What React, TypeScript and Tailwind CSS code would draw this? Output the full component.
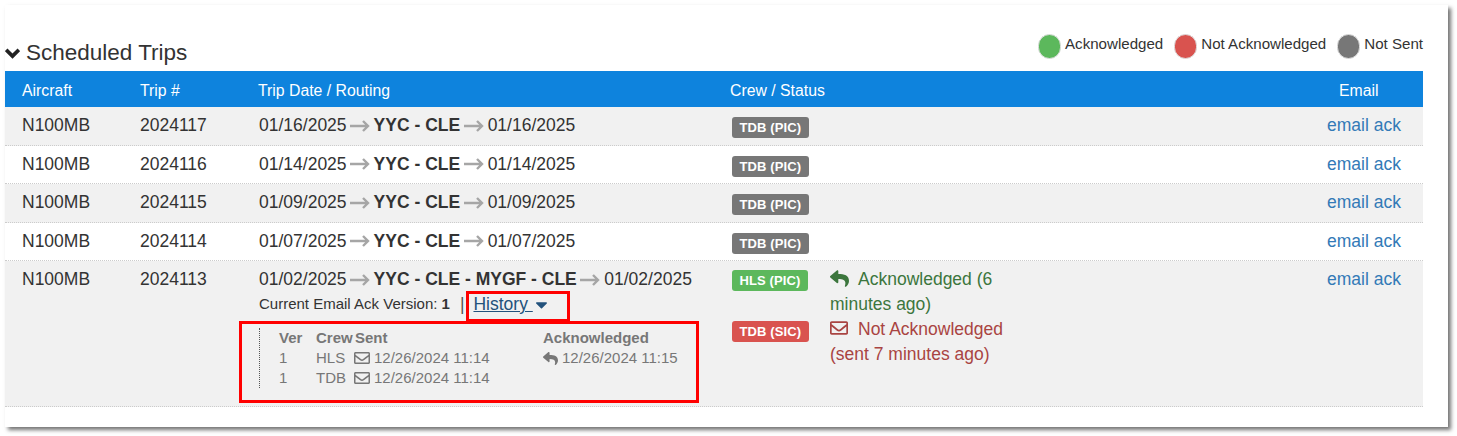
import React from "react";
import { FaCaretDown, FaRegEnvelope, FaReply } from "react-icons/fa";

const trips = [
  { trip: "2024117", date: "01/16/2025", shaded: true },
  { trip: "2024116", date: "01/14/2025", shaded: false },
  { trip: "2024115", date: "01/09/2025", shaded: true },
  { trip: "2024114", date: "01/07/2025", shaded: false },
];

const Arrow = () => (
  <svg viewBox="0 0 20 12" className="mx-[3.5px] inline-block h-[12px] w-[20px] align-[-0.5px] text-[#a6a6a6]" fill="none" stroke="currentColor" strokeWidth="2.4">
    <path d="M0 6h18M13 1l5 5-5 5" />
  </svg>
);

const Badge = ({ label, color }: { label: string; color: string }) => (
  <span className={`inline-block h-[21px] rounded-[3px] px-[7.5px] text-[13px] leading-[21px] font-bold tracking-[0.1px] text-white ${color}`}>
    {label}
  </span>
);

const Legend = ({ label, color }: { label: string; color: string }) => (
  <div className="flex items-center gap-[4px]">
    <span className={`h-[25px] w-[23px] rounded-full border border-[#ddd] ${color}`} />
    <span className="relative top-[-2px]">{label}</span>
  </div>
);

const Routing = ({ date, route }: { date: string; route: string }) => (
  <>
    {date}
    <Arrow />
    <b>{route}</b>
    <Arrow />
    <span className="pl-[0.5px]">{date}</span>
  </>
);

export default function App() {
  return (
    <div className="h-[436px] w-[1457px] bg-white p-[5px] pb-0 font-['Liberation_Sans',Arial,sans-serif] text-[17.5px] text-[#333]">
      <div className="h-[422px] w-[1443px] bg-white shadow-[3px_3px_4px_rgba(0,0,0,0.55)]">
        <div className="w-[1418px]">
          <div className="flex h-[66px] items-start justify-between">
            <div className="mt-[33px] flex items-center gap-[6px] text-[22.5px] leading-[30px]">
              <svg viewBox="0 0 15 12" className="h-[12px] w-[15px] text-[#222]" fill="none" stroke="currentColor" strokeWidth="3.6">
                <path d="M1.2 2.8l6.3 6.3 6.3-6.3" />
              </svg>
              Scheduled Trips
            </div>
            <div className="mt-[28px] flex h-[26px] items-center gap-[11px] text-[15.1px]">
              <Legend label="Acknowledged" color="bg-[#5cb85c]" />
              <Legend label="Not Acknowledged" color="bg-[#d9534f]" />
              <Legend label="Not Sent" color="bg-[#777]" />
            </div>
          </div>

          <div className="flex h-[36px] items-center bg-[#0e83dd] pt-[3px] text-[15.8px] text-white">
            <div className="w-[118px] pl-[17px]">Aircraft</div>
            <div className="w-[118px] pl-[17px]">Trip #</div>
            <div className="w-[471px] pl-[17px]">Trip Date / Routing</div>
            <div className="w-[627px] pl-[18px]">Crew / Status</div>
            <div>Email</div>
          </div>

          {trips.map((t) => (
            <div
              key={t.trip}
              className={`flex h-[38.5px] border-b border-dotted border-[#ccc] pt-[6px] leading-[24px] ${t.shaded ? "bg-[#f1f1f1]" : "bg-white"}`}
            >
              <div className="w-[118px] pl-[17px]">N100MB</div>
              <div className="w-[118px] pl-[17px]">{t.trip}</div>
              <div className="w-[471px] pl-[18px]">
                <Routing date={t.date} route="YYC - CLE" />
              </div>
              <div className="w-[615px] pt-[4px] pl-[20px] leading-none">
                <Badge label="TDB (PIC)" color="bg-[#777]" />
              </div>
              <a className="text-[#337ab7]">email ack</a>
            </div>
          ))}

          <div className="flex h-[145.5px] border-b border-dotted border-[#ccc] bg-[#f1f1f1] pt-[6px] leading-[24px]">
            <div className="w-[118px] pl-[17px]">N100MB</div>
            <div className="w-[118px] pl-[17px]">2024113</div>
            <div className="relative w-[471px] pl-[18px]">
              <Routing date="01/02/2025" route="YYC - CLE - MYGF - CLE" />
              <div className="mt-[1px] flex h-[24px] items-center text-[15px]">
                Current Email Ack Version:&nbsp;<b>1</b>
                <span className="ml-[10px] text-[17.5px] text-[#555]">|</span>
                <a className="relative ml-[9px] flex items-center text-[17.5px] text-[#23527c]">
                  <span className="underline">History&nbsp;</span>
                  <FaCaretDown className="ml-[-1px] text-[19px]" />
                  {/* red annotation box */}
                  <span className="absolute top-[-1px] left-[-7px] h-[31px] w-[104px] border-[3px] border-[#f00]" />
                </a>
              </div>
              <div className="mt-[5px] ml-[-20px] h-[82px] w-[460px] border-[3px] border-[#f00] pt-[5px] pl-[17px] text-[15px] leading-[20px] text-[#777]">
                <div className="w-[420px] border-l border-dotted border-[#555] pl-[19px]">
                  <div className="mt-[-1px] flex font-bold">
                    <div className="w-[37px]">Ver</div>
                    <div className="w-[39px]">Crew</div>
                    <div className="w-[188px]">Sent</div>
                    <div>Acknowledged</div>
                  </div>
                  <div className="flex">
                    <div className="w-[37px]">1</div>
                    <div className="w-[38px]">HLS</div>
                    <div className="flex w-[189px] items-center gap-[4px]">
                      <FaRegEnvelope className="text-[16px]" />
                      12/26/2024 11:14
                    </div>
                    <div className="flex items-center gap-[4px]">
                      <FaReply className="text-[15px]" />
                      12/26/2024 11:15
                    </div>
                  </div>
                  <div className="flex">
                    <div className="w-[37px]">1</div>
                    <div className="w-[38px]">TDB</div>
                    <div className="flex items-center gap-[4px]">
                      <FaRegEnvelope className="text-[16px]" />
                      12/26/2024 11:14
                    </div>
                  </div>
                </div>
              </div>
            </div>
            <div className="w-[615px]">
              <div className="flex h-[50px] pl-[20px]">
                <div className="w-[98px] pt-[3px] leading-none">
                  <Badge label="HLS (PIC)" color="bg-[#5cb85c]" />
                </div>
                <div className="w-[185px] leading-[25px] text-[#3c763d]">
                  <FaReply className="mr-[9px] inline-block align-[-3px] text-[19px]" />
                  Acknowledged (6 minutes ago)
                </div>
              </div>
              <div className="flex h-[50px] pl-[20px]">
                <div className="w-[98px] pt-[4px] leading-none">
                  <Badge label="TDB (SIC)" color="bg-[#d9534f]" />
                </div>
                <div className="w-[185px] leading-[25px] text-[#a94442]">
                  <FaRegEnvelope className="mr-[10px] inline-block align-[-2px] text-[18px]" />
                  Not Acknowledged (sent 7 minutes ago)
                </div>
              </div>
            </div>
            <a className="text-[#337ab7]">email ack</a>
          </div>
        </div>
      </div>
    </div>
  );
}
